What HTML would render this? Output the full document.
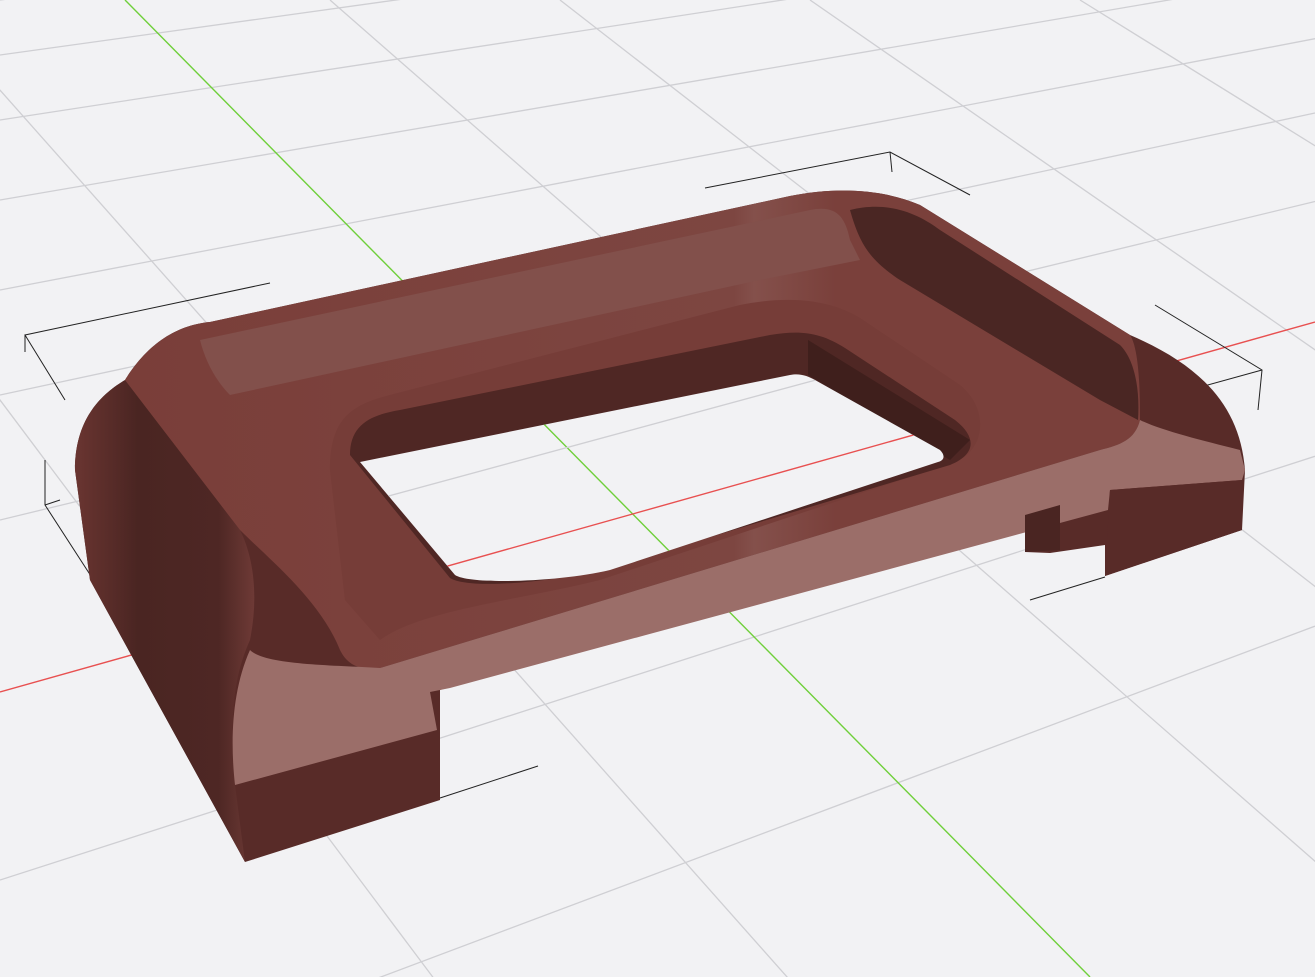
<!DOCTYPE html>
<html><head><meta charset="utf-8"><style>html,body{margin:0;padding:0;background:#f2f2f4;overflow:hidden;width:1315px;height:977px}svg{display:block}</style></head>
<body>
<svg id="s" width="1315" height="977" viewBox="0 0 1315 977" xmlns="http://www.w3.org/2000/svg">
<defs>
<linearGradient id="lside" x1="0" y1="0" x2="1" y2="0">
<stop offset="0" stop-color="#6a3531"/><stop offset="0.35" stop-color="#4a2522"/><stop offset="0.8" stop-color="#4e2724"/><stop offset="1" stop-color="#6e3a36"/>
</linearGradient>
<linearGradient id="rim" x1="0" y1="0" x2="1" y2="0">
<stop offset="0" stop-color="#7a3e39"/><stop offset="0.6" stop-color="#7d4641"/><stop offset="0.62" stop-color="#84504b"/><stop offset="0.7" stop-color="#7a403b"/>
</linearGradient>
</defs>
<g id="grid" stroke="#cfcfd3" stroke-width="1.3" fill="none"></g>
<line x1="125" y1="0" x2="1090" y2="977" stroke="#6fcf3a" stroke-width="1.4"/>
<line x1="0" y1="692" x2="1315" y2="322" stroke="#e85050" stroke-width="1.4"/>
<g stroke="#222" stroke-width="1" fill="none">
<polyline points="270,283 25,335 65,400"/><line x1="25" y1="335" x2="25" y2="352"/>
<polyline points="705,188 890,152 970,195"/><line x1="890" y1="152" x2="892" y2="172"/>
<polyline points="1155,305 1262,370 1258,410"/><line x1="1262" y1="370" x2="1045" y2="430"/>
<line x1="1030" y1="600" x2="1105" y2="577"/>
<line x1="440" y1="798" x2="538" y2="766"/>
<polyline points="45,460 45,505 100,590"/><line x1="45" y1="505" x2="60" y2="500"/>
<line x1="420" y1="600" x2="530" y2="580"/>
</g>
<path d="M75,470 C75,420 100,395 125,380 C150,340 180,325 210,322 L790,196 C840,186 885,190 920,205 L1130,335 C1200,365 1240,405 1245,470 L1242,530 L1105,576 L1105,545 L1050,553 L1025,552 L1025,520 L440,690 L440,800 L245,862 L90,580 Z" fill="#582b28"/>
<path d="M75,470 C75,420 100,395 125,380 L240,530 C255,560 258,600 250,640 C232,680 230,720 235,785 L245,862 L90,580 Z" fill="url(#lside)"/>
<path d="M125,380 C150,340 180,325 210,322 L790,196 C840,186 885,190 920,205 L1130,335 C1140,350 1140,400 1140,420 C1135,440 1120,445 1100,450 L380,668 C355,672 345,660 340,650 C320,600 270,560 240,530 Z" fill="url(#rim)"/>
<path d="M200,340 L810,210 C835,205 845,215 850,240 L860,260 L760,280 L230,395 C215,380 205,360 200,340 Z" fill="#82504b"/>
<path d="M850,210 C890,200 920,215 940,230 L1120,345 C1135,360 1140,390 1138,420 L1100,400 L900,280 C870,260 860,245 850,210 Z" fill="#4a2623"/>
<path d="M330,470 C330,420 350,405 390,395 L740,305 C790,295 830,300 860,318 L960,385 C990,410 985,450 955,462 L600,580 C520,600 420,610 380,640 L345,600 Z" fill="#763d38"/>
<path d="M350,455 C350,425 370,415 400,410 L770,335 C800,330 820,332 845,348 L955,420 C978,438 975,455 950,465 L600,570 C550,582 470,590 450,578 Z" fill="#4f2724"/>
<path d="M808,340 L970,440 L950,460 L808,375 Z" fill="#3f1f1c"/>
<clipPath id="hc"><path d="M360,462 L790,375 C800,373 808,376 815,380 L940,450 C945,455 945,460 938,462 L610,570 C560,582 480,585 455,575 Z"/></clipPath>
<path d="M360,462 L790,375 C800,373 808,376 815,380 L940,450 C945,455 945,460 938,462 L610,570 C560,582 470,585 455,575 Z" fill="#f2f2f4"/>
<g clip-path="url(#hc)"><line x1="125" y1="0" x2="1090" y2="977" stroke="#6fcf3a" stroke-width="1.4"/><line x1="0" y1="692" x2="1315" y2="322" stroke="#e85050" stroke-width="1.4"/><line x1="300" y1="520" x2="1000" y2="330" stroke="#cfcfd3" stroke-width="1.3"/></g>
<path d="M250,650 C265,665 330,665 380,668 L1100,450 C1120,445 1135,440 1140,420 C1160,430 1200,440 1240,450 L1245,470 L1242,480 L1110,490 L1108,510 L450,688 L430,692 L437,730 L235,785 C230,740 232,690 250,650 Z" fill="#9b6e69"/>
<path d="M1025,515 L1060,505 L1060,550 L1025,552 Z" fill="#4a2522"/>
<path d="M1110,490 L1242,480 L1242,530 L1105,576 Z" fill="#582b28"/>
<script>
var g=document.getElementById('grid'),ns='http://www.w3.org/2000/svg';
function L(x1,y1,x2,y2){var l=document.createElementNS(ns,'line');l.setAttribute('x1',x1);l.setAttribute('y1',y1);l.setAttribute('x2',x2);l.setAttribute('y2',y2);g.appendChild(l);}
var A=[4500,-570];[0,55,120,200,290,395,520,880,1120].forEach(function(y){var s=(A[1]-y)/A[0];L(0,y,1315,y+s*1315);});
var B=[-1500,-1600];[-300,-80,330,560,810,1080,1380,1700,2050,2450].forEach(function(x){var s=1600/(x-B[0]);L(x,0,x+1000/s,1000);});
</script>
</svg>
</body></html>
